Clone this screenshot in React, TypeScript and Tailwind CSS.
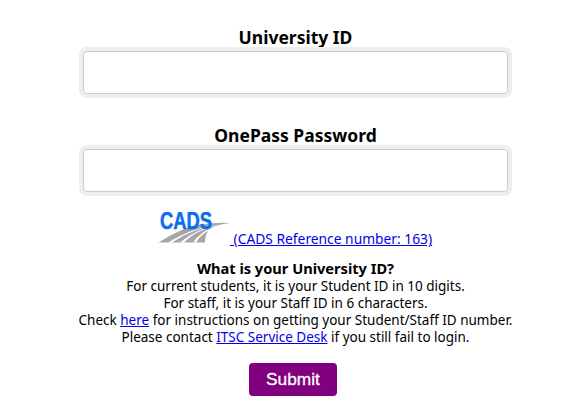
function Field({ label }: { label: string }) {
  return (
    <div className="flex flex-col items-center">
      <label className="text-[17.5px] leading-[20px] font-bold text-black">{label}</label>
      <input
        type="text"
        className="h-[51px] w-[433px] rounded-[8px] border-[4px] border-[#eeeeee] bg-white shadow-[inset_0_0_0_1px_#cccccc] box-border"
      />
    </div>
  );
}

function CadsLogo() {
  return (
    <svg width="73" height="34" viewBox="0 0 73 34" className="mb-[1px] block shrink-0">
      <path d="M1.5 30.5 Q22 17 41 13 Q58 10 73 11 Q56 13 51 19 Q48 24 48 30.5 Z" fill="#a6a6a6" />
      <path d="M11 30.5 L15 30.5 Q34 17 64 12 Q34 16 11 30.5 Z" fill="#ffffff" />
      <path d="M23 30.5 L27 30.5 Q40 17 66 12 Q40 16 23 30.5 Z" fill="#ffffff" />
      <path d="M36 30.5 L39 30.5 Q46 18 68 12 Q46 16 36 30.5 Z" fill="#ffffff" />
      <text x="3" y="17" fontFamily="Liberation Sans" fontWeight="700" fontSize="23" fill="#0a6cf0" stroke="#0a6cf0" strokeWidth="0.5" textLength="52" lengthAdjust="spacingAndGlyphs">
        CADS
      </text>
    </svg>
  );
}

export default function App() {
  return (
    <div className="h-[418px] w-[567px] overflow-hidden bg-white pt-[27px] pl-[79px] font-['Noto_Sans',sans-serif] text-black">
      <div className="flex w-[433px] flex-col items-center">
        <div className="flex flex-col gap-[27px]">
          <Field label="University ID" />
          <Field label="OnePass Password" />
        </div>

        <div className="mt-[16px] flex items-end self-start pl-[78px] text-[13.8px] leading-[17px]">
          <CadsLogo />
          <a href="#" className="whitespace-pre text-[#0000ee] underline">
            {" (CADS Reference number: 163)"}
          </a>
        </div>

        <div className="mt-[13px] w-[480px] text-center text-[13.5px] leading-[17px]">
          <div className="mb-[1px] text-[14.6px] font-bold">What is your University ID?</div>
          <div>For current students, it is your Student ID in 10 digits.</div>
          <div>For staff, it is your Staff ID in 6 characters.</div>
          <div>
            Check <a href="#" className="text-[#0000ee] underline">here</a> for instructions on getting your Student/Staff ID number.
          </div>
          <div>
            Please contact <a href="#" className="text-[#0000ee] underline">ITSC Service Desk</a> if you still fail to login.
          </div>
        </div>

        <button className="mr-[5px] mt-[17px] h-[33px] w-[88px] rounded-[4px] bg-[#800080] font-['Liberation_Sans',sans-serif] text-[17.3px] font-medium text-white [-webkit-text-stroke:0.3px_white]">
          Submit
        </button>
      </div>
    </div>
  );
}
